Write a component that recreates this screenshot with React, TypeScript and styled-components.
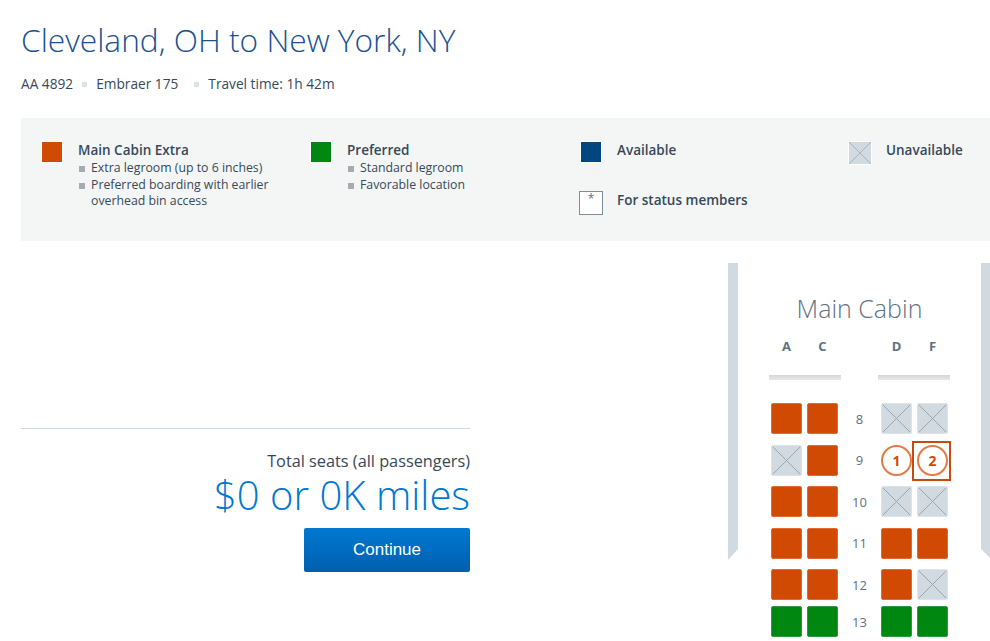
import React from "react";
import styled, { createGlobalStyle } from "styled-components";

const ORANGE = "#d14a04";
const GREEN = "#008712";
const BLUE = "#00467f";
const GREY = "#d0dae0";
const TEXT = "#36495a";
const MUTED = "#5e7282";

const GlobalStyle = createGlobalStyle`
  html, body {
    margin: 0;
    padding: 0;
    background: #ffffff;
  }
  body {
    font-family: "Open Sans", "Liberation Sans", sans-serif;
    color: ${TEXT};
  }
`;

const Page = styled.div`
  width: 990px;
  height: 641px;
  overflow: hidden;
  padding-left: 21px;
  box-sizing: border-box;
`;

const Title = styled.h1`
  margin: 0;
  padding-top: 20px;
  font-size: 31.7px;
  line-height: 40px;
  font-weight: 300;
  color: #1a5190;
`;

const Meta = styled.div`
  margin-top: 14px;
  display: flex;
  align-items: center;
  font-size: 13.7px;
  line-height: 20px;
  color: ${TEXT};
`;

const Dot = styled.span<{ $wide?: boolean }>`
  width: 5px;
  height: 5px;
  background: #dbe2e7;
  margin: ${(p) => (p.$wide ? "0 9px 0 16px" : "0 9px")};
`;

const Legend = styled.div`
  margin-top: 24px;
  height: 123px;
  box-sizing: border-box;
  background: #f4f6f6;
  padding: 23px 0 0 20px;
  display: grid;
  grid-template-columns: 269px 270px 269px 150px;
  width: 1000px;
`;

const LegendCol = styled.div`
  display: flex;
  flex-direction: column;
  gap: 28px;
`;

const LegendItem = styled.div`
  display: flex;
  align-items: flex-start;
  gap: 15px;
`;

type SwatchKind = "extra" | "preferred" | "available" | "unavailable" | "status";

const swatchColor: Record<SwatchKind, string> = {
  extra: ORANGE,
  preferred: GREEN,
  available: BLUE,
  unavailable: GREY,
  status: "#ffffff",
};

const Swatch = styled.div<{ $kind: SwatchKind }>`
  flex: none;
  width: 22px;
  height: 22px;
  box-sizing: border-box;
  border: 1px solid #ffffff;
  display: flex;
  align-items: flex-start;
  justify-content: center;
  position: relative;
  background: ${(p) => swatchColor[p.$kind]};
  ${(p) =>
    (p.$kind === "status" || p.$kind === "unavailable") &&
    `
    width: 24px;
    height: 24px;
    margin: 0 -1px 0 -1px;
  `}
  ${(p) =>
    p.$kind === "status" &&
    `
    border: 1px solid #7d8d99;
    font-size: 12px;
    line-height: 14px;
    color: ${MUTED};
  `}
  svg {
    position: absolute;
    inset: 0;
  }
`;

const LegendTitle = styled.div`
  font-size: 13.5px;
  line-height: 18px;
  font-weight: 600;
  color: ${TEXT};
`;

const Bullets = styled.ul`
  margin: 1px 0 0;
  padding: 0;
  list-style: none;
  width: 205px;
`;

const Bullet = styled.li`
  position: relative;
  padding-left: 13px;
  font-size: 12.3px;
  line-height: 16.5px;
  color: ${TEXT};
  &::before {
    content: "";
    position: absolute;
    left: 1px;
    top: 6px;
    width: 6px;
    height: 6px;
    background: #a4acb2;
  }
`;

const Main = styled.div`
  display: flex;
  align-items: flex-start;
`;

const Summary = styled.div`
  width: 449px;
  padding-top: 187px;
  display: flex;
  flex-direction: column;
  align-items: flex-end;
`;

const Divider = styled.div`
  align-self: stretch;
  height: 1px;
  background: ${GREY};
`;

const TotalLabel = styled.div`
  margin-top: 23px;
  font-size: 16.3px;
  line-height: 18px;
  color: ${TEXT};
`;

const TotalPrice = styled.div`
  font-size: 40px;
  line-height: 50px;
  font-weight: 300;
  color: #0078d2;
`;

const ContinueButton = styled.button`
  margin-top: 8px;
  width: 166px;
  height: 44px;
  border: none;
  border-radius: 2px;
  background: linear-gradient(#0078d2, #005fad);
  color: #ffffff;
  font-family: "Liberation Sans", Arial, sans-serif;
  font-size: 17px;
  cursor: pointer;
`;

const Plane = styled.div`
  margin-left: 258px;
  margin-top: 22px;
  display: flex;
  align-items: flex-start;
`;

const Wall = styled.div<{ $side: "left" | "right" }>`
  flex: none;
  width: ${(p) => (p.$side === "left" ? "10px" : "9px")};
  height: 297px;
  background: ${GREY};
  clip-path: ${(p) =>
    p.$side === "left"
      ? "polygon(0 0, 100% 0, 100% 286px, 0 297px)"
      : "polygon(0 0, 100% 0, 100% 295px, 0 286px)"};
`;

const Cabin = styled.div`
  width: 243px;
  display: flex;
  flex-direction: column;
  align-items: center;
`;

const CabinTitle = styled.div`
  margin-top: 29px;
  font-size: 25px;
  line-height: 32px;
  font-weight: 300;
  color: ${MUTED};
`;

const SeatGrid = styled.div<{ $top?: number }>`
  display: grid;
  grid-template-columns: 31px 31px 33px 31px 31px;
  column-gap: 5px;
  margin-top: ${(p) => p.$top ?? 0}px;
`;

const ColLetter = styled.div`
  text-align: center;
  font-size: 13px;
  line-height: 18px;
  font-weight: 700;
  color: ${MUTED};
`;

const Rails = styled.div`
  display: flex;
  gap: 37px;
  margin-top: 20px;
  margin-bottom: 23px;
`;

const Rail = styled.div`
  width: 72px;
  height: 5px;
  background: linear-gradient(#d6d6d6, #e8e8e8);
`;

const RowNum = styled.div`
  display: flex;
  align-items: center;
  justify-content: center;
  font-size: 13px;
  color: ${MUTED};
`;

type SeatKind = "extra" | "preferred" | "unavailable" | "chosen";

const seatFill: Record<SeatKind, string> = {
  extra: ORANGE,
  preferred: GREEN,
  unavailable: GREY,
  chosen: "#ffffff",
};

const seatEdge: Record<SeatKind, string> = {
  extra: "#e06a30",
  preferred: "#2a9a3a",
  unavailable: "#dde4e9",
  chosen: "#ffffff",
};

const SeatBox = styled.div<{ $kind: SeatKind; $focus?: boolean }>`
  width: 31px;
  height: 31px;
  box-sizing: border-box;
  border-radius: 2px;
  position: relative;
  display: flex;
  align-items: center;
  justify-content: center;
  background: ${(p) => seatFill[p.$kind]};
  border: 1px solid ${(p) => seatEdge[p.$kind]};
  svg {
    position: absolute;
    inset: 0;
  }
  ${(p) =>
    p.$focus &&
    `
    &::after {
      content: "";
      position: absolute;
      inset: -5px -4px -6px -6px;
      border: 2px solid #c84a0c;
    }
  `}
`;

const Chosen = styled.div`
  flex: none;
  width: 31px;
  height: 31px;
  border-radius: 50%;
  border: 2px solid #e27a45;
  box-sizing: border-box;
  display: flex;
  align-items: center;
  justify-content: center;
  font-size: 14px;
  font-weight: 700;
  color: ${ORANGE};
`;

const Cross = () => (
  <svg width="100%" height="100%" viewBox="0 0 31 31">
    <path d="M1 1 L30 30 M30 1 L1 30" stroke="#97a3ac" strokeWidth="1" fill="none" />
  </svg>
);

type SeatSpec = { kind: SeatKind; label?: string; focus?: boolean };

const Seat = ({ spec }: { spec: SeatSpec }) => (
  <SeatBox $kind={spec.kind} $focus={spec.focus}>
    {spec.kind === "unavailable" && <Cross />}
    {spec.kind === "chosen" && <Chosen>{spec.label}</Chosen>}
  </SeatBox>
);

const X: SeatSpec = { kind: "unavailable" };
const E: SeatSpec = { kind: "extra" };
const P: SeatSpec = { kind: "preferred" };

const rows: { n: number; seats: SeatSpec[]; gap: number }[] = [
  { n: 8, seats: [E, E, X, X], gap: 10.5 },
  { n: 9, seats: [X, E, { kind: "chosen", label: "1" }, { kind: "chosen", label: "2", focus: true }], gap: 10.5 },
  { n: 10, seats: [E, E, X, X], gap: 10.5 },
  { n: 11, seats: [E, E, E, E], gap: 10.5 },
  { n: 12, seats: [E, E, E, X], gap: 6 },
  { n: 13, seats: [P, P, P, P], gap: 0 },
];

const SeatRow = styled.div<{ $gap: number }>`
  display: contents;
  & > * {
    margin-bottom: ${(p) => p.$gap}px;
  }
`;

export default function App() {
  return (
    <>
      <GlobalStyle />
      <Page>
        <Title>Cleveland, OH to New York, NY</Title>
        <Meta>
          AA 4892
          <Dot />
          Embraer 175
          <Dot $wide />
          Travel time: 1h 42m
        </Meta>

        <Legend>
          <LegendCol>
            <LegendItem>
              <Swatch $kind="extra" />
              <div>
                <LegendTitle>Main Cabin Extra</LegendTitle>
                <Bullets>
                  <Bullet>Extra legroom (up to 6 inches)</Bullet>
                  <Bullet>Preferred boarding with earlier overhead bin access</Bullet>
                </Bullets>
              </div>
            </LegendItem>
          </LegendCol>
          <LegendCol>
            <LegendItem>
              <Swatch $kind="preferred" />
              <div>
                <LegendTitle>Preferred</LegendTitle>
                <Bullets>
                  <Bullet>Standard legroom</Bullet>
                  <Bullet>Favorable location</Bullet>
                </Bullets>
              </div>
            </LegendItem>
          </LegendCol>
          <LegendCol>
            <LegendItem>
              <Swatch $kind="available" />
              <LegendTitle>Available</LegendTitle>
            </LegendItem>
            <LegendItem>
              <Swatch $kind="status">*</Swatch>
              <LegendTitle>For status members</LegendTitle>
            </LegendItem>
          </LegendCol>
          <LegendCol>
            <LegendItem>
              <Swatch $kind="unavailable">
                <svg width="100%" height="100%" viewBox="0 0 22 22">
                  <path d="M0 0 L22 22 M22 0 L0 22" stroke="#a9b4bc" strokeWidth="1" fill="none" />
                </svg>
              </Swatch>
              <LegendTitle>Unavailable</LegendTitle>
            </LegendItem>
          </LegendCol>
        </Legend>

        <Main>
          <Summary>
            <Divider />
            <TotalLabel>Total seats (all passengers)</TotalLabel>
            <TotalPrice>$0 or 0K miles</TotalPrice>
            <ContinueButton>Continue</ContinueButton>
          </Summary>

          <Plane>
            <Wall $side="left" />
            <Cabin>
              <CabinTitle>Main Cabin</CabinTitle>
              <SeatGrid $top={13}>
                <ColLetter>A</ColLetter>
                <ColLetter>C</ColLetter>
                <span />
                <ColLetter>D</ColLetter>
                <ColLetter>F</ColLetter>
              </SeatGrid>
              <Rails>
                <Rail />
                <Rail />
              </Rails>
              <SeatGrid>
                {rows.map((r) => (
                  <SeatRow key={r.n} $gap={r.gap}>
                    <Seat spec={r.seats[0]} />
                    <Seat spec={r.seats[1]} />
                    <RowNum>{r.n}</RowNum>
                    <Seat spec={r.seats[2]} />
                    <Seat spec={r.seats[3]} />
                  </SeatRow>
                ))}
              </SeatGrid>
            </Cabin>
            <Wall $side="right" />
          </Plane>
        </Main>
      </Page>
    </>
  );
}
